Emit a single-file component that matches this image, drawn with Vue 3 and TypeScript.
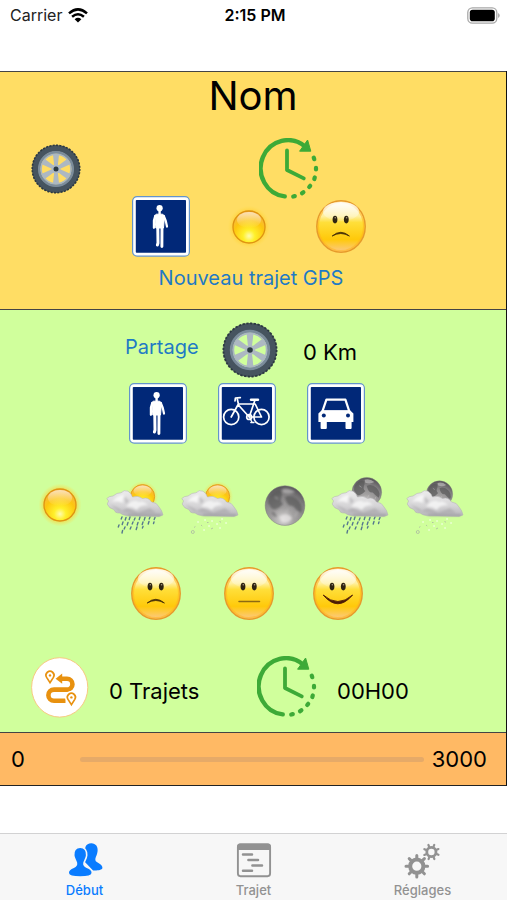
<script setup lang="ts">
import { ref } from 'vue'

interface Choice {
  icon: string
  label: string
}

const transports: Choice[] = [
  { icon: 'walk', label: 'À pied' },
  { icon: 'bike', label: 'Vélo' },
  { icon: 'car', label: 'Voiture' },
]
const weathers: Choice[] = [
  { icon: 'sun', label: 'Soleil' },
  { icon: 'sun-rain', label: 'Pluie, jour' },
  { icon: 'sun-snow', label: 'Neige, jour' },
  { icon: 'moon', label: 'Nuit claire' },
  { icon: 'moon-rain', label: 'Pluie, nuit' },
  { icon: 'moon-snow', label: 'Neige, nuit' },
]
const moods: Choice[] = [
  { icon: 'sad', label: 'Triste' },
  { icon: 'neutral', label: 'Neutre' },
  { icon: 'happy', label: 'Content' },
]
const tabs: Choice[] = [
  { icon: 'people', label: 'Début' },
  { icon: 'plan', label: 'Trajet' },
  { icon: 'gears', label: 'Réglages' },
]

const viewBoxes: Record<string, string> = {
  wheel: '0 0 56 56',
  clock: '0 0 60 62',
  walk: '0 0 58 61',
  bike: '0 0 58 61',
  car: '0 0 58 61',
  sad: '0 0 50 53',
  neutral: '0 0 50 53',
  happy: '0 0 50 53',
  trips: '0 0 58 61',
  people: '0 0 38 38',
  plan: '0 0 38 38',
  gears: '0 0 38 38',
}
const box = (name: string): string => viewBoxes[name] ?? '0 0 60 60'

const distance = ref(0)
const goal = 3000
const transport = ref('walk')
const weather = ref('sun')
const mood = ref('sad')
const activeTab = ref('people')
</script>

<template>
  <div class="screen">
    <svg class="sprite" aria-hidden="true">
      <defs>
        <radialGradient id="g-sun" cx="50%" cy="78%" r="75%">
          <stop offset="0" stop-color="#fffbb0" />
          <stop offset=".25" stop-color="#fff02a" />
          <stop offset=".65" stop-color="#fdc60f" />
          <stop offset="1" stop-color="#f6b44c" />
        </radialGradient>
        <radialGradient id="g-glow">
          <stop offset=".65" stop-color="#ffc21c" stop-opacity=".85" />
          <stop offset="1" stop-color="#ffe04a" stop-opacity="0" />
        </radialGradient>
        <linearGradient id="g-shine" x1="0" y1="0" x2="0" y2="1">
          <stop offset="0" stop-color="#fff" stop-opacity=".6" />
          <stop offset="1" stop-color="#fff" stop-opacity="0" />
        </linearGradient>
        <linearGradient id="g-face" x1="0" y1="0" x2="0" y2="1">
          <stop offset="0" stop-color="#fff3cd" />
          <stop offset=".3" stop-color="#fff0a0" />
          <stop offset=".42" stop-color="#ffdf3a" />
          <stop offset=".75" stop-color="#ffc90a" />
          <stop offset="1" stop-color="#fbc98a" />
        </linearGradient>
        <linearGradient id="g-face-shine" x1="0" y1="0" x2="0" y2="1">
          <stop offset="0" stop-color="#fff" stop-opacity=".9" />
          <stop offset="1" stop-color="#fff" stop-opacity=".1" />
        </linearGradient>
        <radialGradient id="g-moon" cx="45%" cy="85%" r="80%">
          <stop offset="0" stop-color="#d6d4d3" />
          <stop offset=".35" stop-color="#a3a1a1" />
          <stop offset=".75" stop-color="#858384" />
          <stop offset="1" stop-color="#5d5b5d" />
        </radialGradient>
        <linearGradient id="g-cloud" x1="0" y1="0" x2="0" y2="1">
          <stop offset="0" stop-color="#ececec" />
          <stop offset=".6" stop-color="#d5d4d6" />
          <stop offset="1" stop-color="#b4b3b7" />
        </linearGradient>
        <filter id="f-soft" x="-20%" y="-20%" width="140%" height="140%">
          <feGaussianBlur stdDeviation=".8" />
        </filter>
      </defs>

      <symbol id="wheel" viewBox="0 0 56 56">
        <circle cx="28" cy="28" r="23.2" fill="none" stroke="#46545f" stroke-width="7.4" />
        <circle cx="28" cy="28" r="26.6" fill="none" stroke="#2c3840" stroke-width="1.8" pathLength="88" stroke-dasharray="1.2 .8" />
        <circle cx="28" cy="28" r="18.7" fill="none" stroke="#7b8c9b" stroke-width="3" />
        <circle cx="28" cy="28" r="16.6" fill="none" stroke="#a9b6c0" stroke-width="1.6" />
        <g fill="#adb8c2">
          <path id="spoke" d="M24.6 11.5H31.4L29.6 28H26.4Z" />
          <use href="#spoke" transform="rotate(60 28 28)" />
          <use href="#spoke" transform="rotate(120 28 28)" />
          <use href="#spoke" transform="rotate(180 28 28)" />
          <use href="#spoke" transform="rotate(240 28 28)" />
          <use href="#spoke" transform="rotate(300 28 28)" />
          <circle cx="28" cy="28" r="5" />
        </g>
        <circle cx="28" cy="28" r="2.8" fill="#2c3a43" />
      </symbol>

      <symbol id="clock" viewBox="0 0 60 62">
        <g fill="none" stroke="#3daa37" stroke-linecap="round" stroke-linejoin="round">
          <path d="M25.7 58.4A27.3 28.2 0 1 1 46.5 8.8" stroke-width="4.4" />
          <path d="M28 12.5V32L44.8 40.4" stroke-width="3.8" />
          <path d="M54.7 19.6L55.3 21.2M57 29.8V31.4M55.8 39.4L55.3 41M51.2 47.8L50.2 49M44.4 54.2L43 55.2M35.8 58.1L34.2 58.5" stroke-width="4.2" />
        </g>
        <path d="M48.6 2L51.8 13.2L40.6 13.2Z" fill="#3daa37" stroke="#3daa37" stroke-linejoin="round" />
      </symbol>

      <symbol id="sign" viewBox="0 0 58 61">
        <rect x=".6" y=".6" width="56.8" height="59.6" rx="4.5" fill="#fff" stroke="#6494cb" stroke-width="1.2" />
        <rect x="3.8" y="4" width="50.2" height="52.8" rx=".8" fill="#012878" />
      </symbol>

      <symbol id="walk" viewBox="0 0 58 61">
        <use href="#sign" />
        <g fill="none" stroke="#fff" stroke-linecap="round" stroke-linejoin="round">
          <circle cx="27.6" cy="12.2" r="3.1" fill="#fff" stroke="none" />
          <path d="M27.6 14V18" stroke-width="2.4" />
          <path d="M24.5 18.2H30.7L32.5 20L31.5 32H23.8L22.8 20Z" fill="#fff" stroke-width="1" />
          <path d="M23.2 20L21.9 24.5V31.8M31.8 20L33.8 25L35 30.6" stroke-width="2.2" />
          <path d="M25.8 32L26 47L25.4 49" stroke-width="3" />
          <path d="M30 32L29.9 50.6" stroke-width="2.9" />
        </g>
      </symbol>

      <symbol id="bike" viewBox="0 0 58 61">
        <use href="#sign" />
        <g fill="none" stroke="#fff" stroke-width="1.7" stroke-linecap="round" stroke-linejoin="round">
          <circle cx="13.2" cy="34" r="7.6" />
          <circle cx="43.5" cy="34" r="7.6" />
          <path d="M17 18L17.4 15L22.3 14.6M19.2 15.5L20.4 21L13.2 34M20.4 21H37.2L43.5 34H31.2L20.4 22M37 17L31.2 34" />
          <path d="M33 16.8H40" stroke-width="2.4" />
          <circle cx="31.2" cy="34" r="2.5" />
          <path d="M31.2 34L34 39M32.8 39.5H36" stroke-width="1.3" />
        </g>
      </symbol>

      <symbol id="car" viewBox="0 0 58 61">
        <use href="#sign" />
        <path d="M19.4 16.6H38.4L42.3 28.4H15.4Z" fill="#012878" stroke="#fff" stroke-width="2.2" stroke-linejoin="round" />
        <path d="M14.5 27.6H43.3L46.4 30.5V39H44.6V45Q44.6 46 43.6 46H39.5Q38.5 46 38.5 45V39H19.8V45Q19.8 46 18.8 46H14.6Q13.6 46 13.6 45V39H11.4V30.5Z" fill="#fff" />
        <circle cx="16.8" cy="32.6" r="2" fill="#012878" />
        <circle cx="41" cy="32.6" r="2" fill="#012878" />
      </symbol>

      <symbol id="sun" viewBox="0 0 60 60">
        <circle cx="30" cy="30" r="21.5" fill="url(#g-glow)" />
        <circle cx="30" cy="30" r="16" fill="url(#g-sun)" stroke="#df9412" stroke-width="1.3" />
        <ellipse cx="30" cy="23" rx="12" ry="8" fill="url(#g-shine)" />
      </symbol>

      <symbol id="moon" viewBox="0 0 60 60">
        <circle cx="30" cy="30.6" r="19.8" fill="url(#g-moon)" stroke="#7f7d7e" stroke-width=".5" />
        <g filter="url(#f-soft)">
          <path d="M13 28Q12 20 20 16Q27 13 27 20Q24 26 28 29Q22 36 17 34Z" fill="#555456" opacity=".65" />
          <path d="M30 22Q37 19 43 25Q49 31 46 38Q41 35 38 31Q32 32 30 22Z" fill="#555456" opacity=".65" />
          <path d="M16 37Q20 36 22 42Q18 42 16 37Z" fill="#666466" opacity=".6" />
          <path d="M27 14Q34 12 40 17Q35 20 28 18Z" fill="#c6c4c4" opacity=".6" />
          <path d="M24 42Q31 36 37 43Q34 49 27 47Z" fill="#e8e6e5" opacity=".7" />
          <path d="M20 22L23 24M33 34L30 40M40 42L42 37" stroke="#c9c7c7" opacity=".6" />
        </g>
      </symbol>

      <symbol id="cloud" viewBox="0 0 60 60">
        <path d="M2.2 29L3.6 26L1.8 23.5Q4 21 8 21Q12 17.5 16 17.8Q19 14.5 23 16.2Q26 18 27.5 22Q33 20 37.5 23.5Q43 21.5 46.5 27Q52 27.5 54 32Q57 35 58 40L54 41.4L22 40.8Q17 40 15 38Q10 38.5 9 34.5Q4 33.5 2.2 29Z" fill="url(#g-cloud)" stroke="#b1afb2" stroke-width=".5" />
        <g filter="url(#f-soft)">
          <path d="M7 27Q13 19 20 20Q17 23 18 28Q12 25 7 27Z" fill="#fff" opacity=".7" />
          <path d="M21 32Q27 23 34 27Q38 25 43 30Q34 30 32 35Q26 31 21 32Z" fill="#fafafa" opacity=".75" />
          <path d="M5 30Q12 31 17 36L22 33Q29 35 33 38L45 33L51 38L31 39L14 36Z" fill="#98969b" opacity=".4" />
          <path d="M19 21L24 26L21 29Z" fill="#a5a3a7" opacity=".5" />
          <path d="M23 40.2H56" stroke="#8d8b91" stroke-width="1.2" opacity=".7" />
        </g>
      </symbol>

      <symbol id="rain" viewBox="0 0 60 60">
        <path d="M17 42L16.2 44M21 42.5L20.2 45M25 42L24.2 44.5M30 43L29.2 45M35 42L34.2 44.5M40 42.5L39.2 45M45 42L44.2 44M50 42.5L49.2 44.5M18 47L17.2 49.5M23 47.5L22.2 50M28 47L27.2 49M33 47.5L32.2 50M38 47L37.2 49.5M44 46.5L43.2 49M49 47L48.5 48.5M14 50L13.3 52M20 52L19.2 54M26 52L25.2 54M32 52L31.2 54.5M38 51.5L37.4 53M17.6 55.5L17 58" fill="none" stroke="#55788e" stroke-width="1.4" stroke-linecap="round" />
      </symbol>

      <symbol id="snow" viewBox="0 0 60 60">
        <g fill="none" stroke="#fff" stroke-width="1.8" stroke-linecap="round" opacity=".55">
          <path d="M18 47H18.1M25 45H25.1M32 46H32.1M29 51H29.1M37 49H37.1M24 55H24.1M42 44H42.1M40 53H40.1M46 48H46.1" />
        </g>
        <g fill="none" stroke="#a9b1a3" stroke-width="1" opacity=".75">
          <circle cx="12.8" cy="57" r="1.5" />
          <path d="M14 52.5L15.4 51.5M21 50L22.2 51M31 54L33 53M39.5 46.5L41 47.2M27 47.5H28.5" />
        </g>
      </symbol>

      <symbol id="sun-back" viewBox="0 0 60 60">
        <circle cx="37.6" cy="21.6" r="15.6" fill="url(#g-glow)" opacity=".7" />
        <circle cx="37.6" cy="21.6" r="12" fill="url(#g-sun)" stroke="#e5a01d" />
        <ellipse cx="37.6" cy="16" rx="9" ry="5.4" fill="url(#g-shine)" />
      </symbol>
      <symbol id="sun-rain" viewBox="0 0 60 60">
        <use href="#sun-back" /><use href="#rain" /><use href="#cloud" />
      </symbol>
      <symbol id="sun-snow" viewBox="0 0 60 60">
        <use href="#sun-back" /><use href="#snow" /><use href="#cloud" />
      </symbol>
      <symbol id="moon-rain" viewBox="0 0 60 60">
        <use href="#moon" width="45" height="45" x="14.3" y="-5.7" /><use href="#rain" /><use href="#cloud" />
      </symbol>
      <symbol id="moon-snow" viewBox="0 0 60 60">
        <use href="#moon" width="40" height="40" x="14.5" y="-1.4" /><use href="#snow" /><use href="#cloud" />
      </symbol>

      <symbol id="face" viewBox="0 0 50 53">
        <ellipse cx="25" cy="26.5" rx="24.2" ry="25.7" fill="url(#g-face)" stroke="#e69a2c" stroke-width="1.5" />
        <ellipse cx="25" cy="26.5" rx="22.8" ry="24.3" fill="none" stroke="#ffb31e" stroke-width="1.6" opacity=".55" />
        <ellipse cx="25" cy="11.5" rx="18" ry="9.5" fill="url(#g-face-shine)" />
        <g fill="#2e2411">
          <ellipse cx="19" cy="19.6" rx="2.4" ry="3.8" />
          <ellipse cx="30.3" cy="19.6" rx="2.4" ry="3.8" />
        </g>
        <g fill="#a79a80">
          <circle cx="19.3" cy="17.8" r=".8" />
          <circle cx="30.6" cy="17.8" r=".8" />
        </g>
      </symbol>
      <symbol id="sad" viewBox="0 0 50 53">
        <use href="#face" />
        <path d="M16.2 36Q24.8 28.6 33.4 36Q24.8 31 16.2 36Z" fill="#4a3208" stroke="#4a3208" stroke-width=".9" stroke-linejoin="round" />
      </symbol>
      <symbol id="neutral" viewBox="0 0 50 53">
        <use href="#face" />
        <path d="M15 34.4H35.5" stroke="#8c6a12" stroke-width="1.5" stroke-linecap="round" />
      </symbol>
      <symbol id="happy" viewBox="0 0 50 53">
        <use href="#face" />
        <path d="M10.2 28Q24.8 45.5 39.6 28Q24.8 41 10.2 28Z" fill="#4b1a06" stroke="#4b1a06" stroke-width=".9" stroke-linejoin="round" />
      </symbol>

      <symbol id="trips" viewBox="0 0 58 61">
        <ellipse cx="28.7" cy="30.4" rx="28.1" ry="29.7" fill="#fff" stroke="#f8c983" stroke-width="1" />
        <g fill="none" stroke="#e8910f">
          <path d="M29 21.7H36A5.2 5.2 0 0 1 36 32.6H23A5.6 5.6 0 0 0 23 43.8H34.5" stroke-width="4.6" />
          <path d="M19 25.6L15.6 20.4A4 4 0 1 1 22.4 20.4Z" stroke-width="1.7" fill="#fff" />
          <path d="M40.4 47.6L37 42.4A4 4 0 1 1 43.8 42.4Z" stroke="#fff" stroke-width="4.6" />
          <path d="M40.4 47.6L37 42.4A4 4 0 1 1 43.8 42.4Z" stroke-width="1.7" fill="#fff" />
        </g>
        <path d="M24.6 21.7L31.2 16.6V26.8Z" fill="#e8910f" />
        <circle cx="19" cy="18.4" r="1.2" fill="#e8910f" />
        <circle cx="40.4" cy="40.4" r="1.2" fill="#e8910f" />
      </symbol>

      <symbol id="people" viewBox="0 0 38 38">
        <path id="bust" d="M25.3 2.3C30 2.3 32 6 31.6 10C31.3 13.6 30 15 29.4 17.6C29 20 30 20.8 32.4 22C35.4 23.5 36.6 25.3 36.4 27C36 29.3 31 29.6 27 29.4L18 20L19.4 6Q21 2.3 25.3 2.3Z" fill="currentColor" />
        <path d="M14.2 6.2C19 6.2 21 10 20.7 14.2C20.4 18 18.6 19.4 18 22C17.6 24.2 18.4 25.2 21 26.2C24.6 27.7 26.6 29.6 26.3 32C26 35.2 20 36 14.2 36S2.4 35.2 2.2 32C2 29.6 4 27.7 7.6 26.2C10.2 25.2 10.8 24.2 10.4 22C9.8 19.4 8 18 7.7 14.2C7.4 10 9.4 6.2 14.2 6.2Z" fill="currentColor" stroke="#f7f7f7" stroke-width="1.6" />
      </symbol>
      <symbol id="plan" viewBox="0 0 38 38">
        <rect x="2.9" y="3.4" width="32.2" height="31.8" rx="2.6" fill="none" stroke="currentColor" stroke-width="1.9" />
        <path d="M2.2 9V5.5Q2.2 2.6 5 2.6H33Q35.8 2.6 35.8 5.5V9Z" fill="currentColor" />
        <path d="M8 13.6H17M13.4 19H23M17.4 24.4H27M8 29.8H17" stroke="currentColor" stroke-width="2.5" stroke-linecap="round" />
      </symbol>
      <symbol id="gears" viewBox="0 0 38 38">
        <g fill="none" stroke="currentColor">
          <circle cx="12.8" cy="25.2" r="6.6" stroke-width="4" />
          <path d="M12.8 14.4V18M12.8 32.4V36M2 25.2H5.6M20 25.2H23.6M5.2 17.6L7.7 20.1M17.9 30.3L20.4 32.8M5.2 32.8L7.7 30.3M17.9 20.1L20.4 17.6" stroke-width="3" stroke-linecap="round" />
          <circle cx="27.4" cy="11" r="4.6" stroke-width="2.8" />
          <g transform="rotate(22 27.4 11)">
            <path d="M27.4 3.4V6M27.4 16V18.6M19.8 11H22.4M32.4 11H35M22 5.6L23.8 7.4M31 14.6L32.8 16.4M22 16.4L23.8 14.6M31 7.4L32.8 5.6" stroke-width="2.2" stroke-linecap="round" />
          </g>
        </g>
      </symbol>
    </svg>

    <header class="status">
      <span class="carrier">
        Carrier
        <svg class="wifi" viewBox="0 0 20 15" aria-hidden="true">
          <g fill="none" stroke="#000" stroke-width="2.5">
            <path d="M1 5.4Q10-2.6 19 5.4" />
            <path d="M4.1 8.8Q10 3.8 15.9 8.8" />
          </g>
          <path d="M10 14.6L6.6 11.2Q10 8.4 13.4 11.2Z" />
        </svg>
      </span>
      <time class="time">2:15 PM</time>
      <svg class="battery" viewBox="0 0 33 17" aria-hidden="true">
        <rect x=".8" y=".8" width="29" height="15.4" rx="4.6" fill="none" stroke="#a8a8a8" stroke-width="1.3" />
        <rect x="2.8" y="2.8" width="25" height="11.4" rx="2.8" />
        <path d="M31.2 6V11Q32.6 10.2 32.6 8.5T31.2 6Z" fill="#a0a0a0" />
      </svg>
    </header>

    <main class="board">
      <section class="panel profile">
        <h1 class="name">Nom</h1>
        <div class="profile-top">
          <svg class="wheel-small" :viewBox="box('wheel')"><use href="#wheel" /></svg>
          <svg class="clock" :viewBox="box('clock')"><use href="#clock" /></svg>
        </div>
        <div class="current">
          <svg class="sign" :viewBox="box(transport)"><use :href="'#' + transport" /></svg>
          <svg class="weather" :viewBox="box(weather)"><use :href="'#' + weather" /></svg>
          <svg class="mood" :viewBox="box(mood)"><use :href="'#' + mood" /></svg>
        </div>
        <a class="link" href="#gps">Nouveau trajet GPS</a>
      </section>

      <section class="panel summary">
        <div class="distance">
          <a class="link share" href="#partage">Partage</a>
          <svg class="wheel" :viewBox="box('wheel')"><use href="#wheel" /></svg>
          <span class="value km">{{ distance }} Km</span>
        </div>
        <div class="signs">
          <button v-for="t in transports" :key="t.icon" type="button" :aria-label="t.label" @click="transport = t.icon">
            <svg class="sign" :viewBox="box(t.icon)"><use :href="'#' + t.icon" /></svg>
          </button>
        </div>
        <div class="weathers">
          <button v-for="w in weathers" :key="w.icon" type="button" :aria-label="w.label" @click="weather = w.icon">
            <svg class="weather" :viewBox="box(w.icon)"><use :href="'#' + w.icon" /></svg>
          </button>
        </div>
        <div class="moods">
          <button v-for="m in moods" :key="m.icon" type="button" :aria-label="m.label" @click="mood = m.icon">
            <svg class="mood" :viewBox="box(m.icon)"><use :href="'#' + m.icon" /></svg>
          </button>
        </div>
        <div class="totals">
          <svg class="trips" :viewBox="box('trips')"><use href="#trips" /></svg>
          <span class="value">0 Trajets</span>
          <svg class="clock" :viewBox="box('clock')"><use href="#clock" /></svg>
          <span class="value">00H00</span>
        </div>
      </section>

      <section class="panel progress">
        <label class="value start" for="progress">{{ distance }}</label>
        <progress id="progress" class="bar" :value="distance" :max="goal"></progress>
        <span class="value">{{ goal }}</span>
      </section>
    </main>

    <nav class="tabs">
      <a
        v-for="tab in tabs"
        :key="tab.icon"
        class="tab"
        :class="{ active: activeTab === tab.icon }"
        :href="'#' + tab.label"
        @click.prevent="activeTab = tab.icon"
      >
        <svg class="tab-icon" :viewBox="box(tab.icon)" aria-hidden="true"><use :href="'#' + tab.icon" /></svg>
        <span>{{ tab.label }}</span>
      </a>
    </nav>
  </div>
</template>

<style>
body {
  margin: 0;
  background: #fff;
}
</style>

<style scoped>
.screen {
  display: flex;
  flex-direction: column;
  min-height: 100vh;
  font-family: Inter, "Liberation Sans", sans-serif;
  color: #000;
}
svg {
  display: block;
  flex: none;
}
.sprite {
  position: absolute;
  width: 0;
  height: 0;
}
button {
  display: block;
  padding: 0;
  border: 0;
  background: none;
  cursor: pointer;
}
a {
  text-decoration: none;
}
.status {
  display: grid;
  grid-template-columns: 1fr auto 1fr;
  align-items: center;
  height: 30px;
  padding: 0 7px 0 10px;
  margin-bottom: 41px;
  font-size: 16px;
  line-height: 20px;
}
.carrier {
  display: flex;
  align-items: center;
  gap: 6px;
  color: #222;
}
.wifi {
  width: 20px;
  height: 15px;
}
.time {
  font-weight: 600;
}
.battery {
  width: 33px;
  height: 17px;
  justify-self: end;
}
.board {
  border-right: 1px solid #111;
  border-bottom: 1px solid #222;
}
.panel {
  border-top: 1px solid #444;
}
.profile {
  display: flex;
  flex-direction: column;
  align-items: center;
  height: 238px;
  box-sizing: border-box;
  background: #ffdd64;
}
.name {
  margin: 0;
  font-size: 40px;
  font-weight: 400;
  line-height: 48px;
}
.profile-top {
  display: grid;
  grid-template-columns: 1fr 1fr;
  align-items: center;
  align-self: stretch;
  margin-top: 18px;
  padding: 0 20px 0 31px;
}
.current {
  display: grid;
  grid-template-columns: 58px 60px 58px;
  column-gap: 29px;
  align-items: center;
  margin: -4px 8px 0 0;
}
.current .mood {
  justify-self: end;
}
.link {
  font-size: 20px;
  line-height: 24px;
  color: #1f7ac4;
}
.profile .link {
  margin: 9px 4px 0 0;
}
.wheel-small {
  width: 50px;
  height: 52px;
}
.wheel {
  width: 56px;
  height: 56px;
}
.clock {
  width: 60px;
  height: 62px;
}
.sign,
.trips {
  width: 58px;
  height: 61px;
}
.weather {
  width: 60px;
  height: 60px;
}
.mood {
  width: 50px;
  height: 53px;
}
.value {
  font-size: 22px;
  line-height: 28px;
}
.summary {
  padding: 12px 12px 14px 0;
  background: #d0ff9c;
}
.distance {
  display: grid;
  grid-template-columns: 72px 56px 66px;
  justify-content: center;
  align-items: center;
  column-gap: 25px;
}
.share {
  padding-bottom: 6px;
}
.km {
  padding-top: 4px;
}
.signs {
  display: flex;
  justify-content: center;
  gap: 31px;
  margin-top: 5px;
}
.weathers {
  display: flex;
  justify-content: center;
  gap: 15px;
  margin-top: 31px;
}
.moods {
  display: grid;
  grid-template-columns: 54px 50px 50px;
  justify-content: center;
  column-gap: 39px;
  margin-top: 32px;
}
.totals {
  display: grid;
  grid-template-columns: 58px 1fr 60px 1fr;
  align-items: center;
  column-gap: 20px;
  margin-top: 36px;
  padding: 0 29px 0 31px;
}
.totals .value {
  padding-top: 8px;
}
.progress {
  display: flex;
  align-items: center;
  gap: 8px;
  height: 52px;
  padding: 0 19px 0 11px;
  background: #ffb964;
}
.start {
  width: 61px;
}
.bar {
  flex: 1;
  min-width: 0;
  height: 5px;
  border: 0;
  border-radius: 3px;
  appearance: none;
  background: #e6aa68;
  overflow: hidden;
}
.bar::-webkit-progress-bar {
  background: #e6aa68;
}
.bar::-webkit-progress-value {
  background: #007aff;
}
.tabs {
  display: grid;
  grid-template-columns: repeat(3, 1fr);
  height: 66px;
  margin-top: auto;
  border-top: 1px solid #d2d2d3;
  background: #f7f7f7;
}
.tab {
  display: flex;
  flex-direction: column;
  align-items: center;
  padding-top: 7px;
  font-size: 13px;
  font-weight: 500;
  line-height: 16px;
  color: #929292;
}
.tab.active {
  color: #0a7cff;
}
.tab-icon {
  width: 38px;
  height: 38px;
  margin-bottom: 3px;
}
</style>
